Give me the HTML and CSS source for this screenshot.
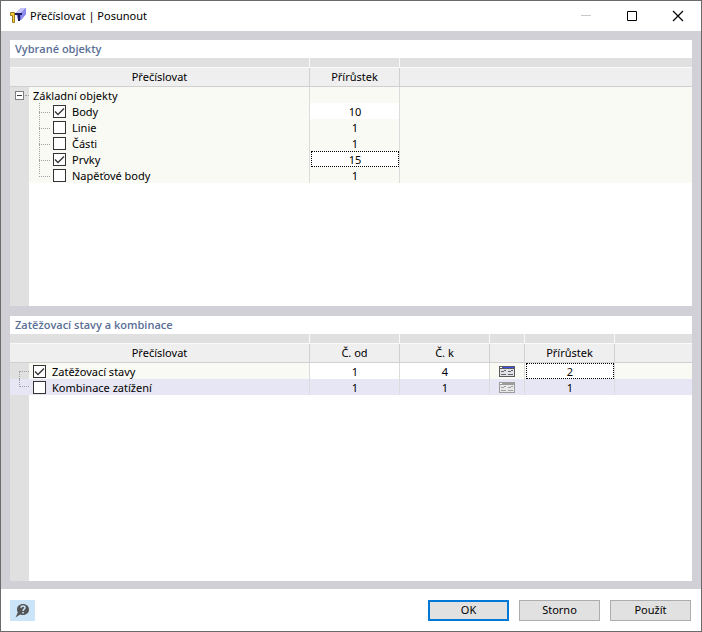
FILE: index.html
```html
<!DOCTYPE html>
<html lang="cs">
<head>
    <meta charset="UTF-8">
    <meta name="viewport" content="width=device-width, initial-scale=1.0">
    <title>Přečíslovat | Posunout</title>
    <link rel="stylesheet" href="styles.css">
</head>
<body>
    <div class="window">
        <header class="titlebar">
            <svg class="app-icon" width="18" height="18" viewBox="0 0 18 18">
                <path d="M7 6L12 1H17V7L12 13H9Z" fill="#7474e6"/>
                <path d="M7 6L12 1H17L12 6Z" fill="#c4c4fa"/>
                <path d="M12 6L17 1V7L12 13Z" fill="#8c8cf0"/>
                <path d="M6 6H13V8H11V14H9V8H6Z" fill="#1c1c5c"/>
                <path d="M1.500 5.500H5.500V15.500H3.500V8.500H1.500Z" fill="#f5d02e" stroke="#9a7a2a"/>
            </svg>
            <h1>Přečíslovat | Posunout</h1>
            <div class="window-buttons">
                <button type="button" aria-label="Minimalizovat" disabled>
                    <svg width="12" height="12" viewBox="0 0 12 12"><path d="M1 5.500H11" stroke="#c8c8c8"/></svg>
                </button>
                <button type="button" aria-label="Maximalizovat">
                    <svg width="12" height="12" viewBox="0 0 12 12"><path d="M1.500 1.500H10.500V10.500H1.500Z" fill="none" stroke="#000"/></svg>
                </button>
                <button type="button" aria-label="Zavřít">
                    <svg width="12" height="12" viewBox="0 0 12 12"><path d="M1 1L11 11M11 1L1 11" stroke="#000" stroke-width="1.200"/></svg>
                </button>
            </div>
        </header>

        <main class="content">
            <section class="panel panel-objects">
                <h2>Vybrané objekty</h2>
                <table>
                    <colgroup>
                        <col class="col-gutter"><col class="col-name"><col class="col-value"><col>
                    </colgroup>
                    <thead>
                        <tr class="strip"><td colspan="2"></td><td></td><td></td></tr>
                        <tr><th colspan="2">Přečíslovat</th><th>Přírůstek</th><th></th></tr>
                    </thead>
                    <tbody>
                        <tr>
                            <td class="gutter"><div class="toggle-line"><button class="toggle" type="button" aria-label="Sbalit"></button></div></td>
                            <td><div class="item root">Základní objekty</div></td><td></td><td></td>
                        </tr>
                        <tr>
                            <td class="gutter"></td>
                            <td><div class="item child"><input type="checkbox" id="body" checked><label for="body">Body</label></div></td>
                            <td><input class="value" type="text" value="10" aria-label="Body přírůstek"></td><td></td>
                        </tr>
                        <tr>
                            <td class="gutter"></td>
                            <td><div class="item child"><input type="checkbox" id="linie"><label for="linie">Linie</label></div></td>
                            <td><div class="number">1</div></td><td></td>
                        </tr>
                        <tr>
                            <td class="gutter"></td>
                            <td><div class="item child"><input type="checkbox" id="casti"><label for="casti">Části</label></div></td>
                            <td><div class="number">1</div></td><td></td>
                        </tr>
                        <tr>
                            <td class="gutter"></td>
                            <td><div class="item child"><input type="checkbox" id="prvky" checked><label for="prvky">Prvky</label></div></td>
                            <td class="current"><input class="value" type="text" value="15" aria-label="Prvky přírůstek"></td><td></td>
                        </tr>
                        <tr>
                            <td class="gutter"></td>
                            <td><div class="item child last"><input type="checkbox" id="napetove"><label for="napetove">Napěťové body</label></div></td>
                            <td><div class="number">1</div></td><td></td>
                        </tr>
                    </tbody>
                </table>
            </section>

            <section class="panel">
                <h2>Zatěžovací stavy a kombinace</h2>
                <table>
                    <colgroup>
                        <col class="col-gutter"><col class="col-name"><col class="col-value"><col class="col-value"><col class="col-icon"><col class="col-value"><col>
                    </colgroup>
                    <thead>
                        <tr class="strip"><td colspan="2"></td><td></td><td></td><td></td><td></td><td></td></tr>
                        <tr><th colspan="2">Přečíslovat</th><th>Č. od</th><th>Č. k</th><th></th><th>Přírůstek</th><th></th></tr>
                    </thead>
                    <tbody>
                        <tr>
                            <td class="gutter"><div class="link link-top"></div></td>
                            <td><div class="item"><input type="checkbox" id="stavy" checked><label for="stavy">Zatěžovací stavy</label></div></td>
                            <td><input class="value" type="text" value="1" aria-label="Č. od"></td>
                            <td><input class="value" type="text" value="4" aria-label="Č. k"></td>
                            <td>
                                <button class="pick" type="button" aria-label="Vybrat">
                                    <svg width="16" height="11" viewBox="0 0 16 11">
                                        <path d="M0 0H16V11H0Z" fill="#5a5a5a"/>
                                        <path d="M1 3H15V10H1Z" fill="#e2e2ea"/>
                                        <path d="M1 1H3V2H1Z" fill="#fff"/>
                                        <path d="M4 1H15V2H4Z" fill="#3c50f0"/>
                                        <path d="M2 5.500H5M5 4.500H7M9 5.500H12M12 4.500H14M2 8.500H7M9 8.500H14" stroke="#666"/>
                                    </svg>
                                </button>
                            </td>
                            <td class="current"><input class="value" type="text" value="2" aria-label="Přírůstek"></td><td></td>
                        </tr>
                        <tr class="selected">
                            <td class="gutter"><div class="link link-bottom"></div></td>
                            <td><div class="item"><input type="checkbox" id="kombinace"><label for="kombinace">Kombinace zatížení</label></div></td>
                            <td><div class="number">1</div></td>
                            <td><div class="number">1</div></td>
                            <td>
                                <button class="pick" type="button" aria-label="Vybrat" disabled>
                                    <svg width="16" height="11" viewBox="0 0 16 11">
                                        <path d="M0 0H16V11H0Z" fill="#9c9c9c"/>
                                        <path d="M1 3H15V10H1Z" fill="#e8e8e8"/>
                                        <path d="M1 1H3V2H1Z" fill="#fff"/>
                                        <path d="M2 5.500H5M5 4.500H7M9 5.500H12M12 4.500H14M2 8.500H7M9 8.500H14" stroke="#a0a0a0"/>
                                    </svg>
                                </button>
                            </td>
                            <td><div class="number">1</div></td><td></td>
                        </tr>
                    </tbody>
                </table>
            </section>
        </main>

        <footer class="footer">
            <button class="help" type="button" aria-label="Nápověda">
                <svg width="15" height="15" viewBox="0 0 15 15">
                    <path d="M8 1C11.500 1 14 3.300 14 6.500S11.500 12 8 12C7 12 6 11.800 5.200 11.400L0.500 14.500L2.800 9.600C2.200 8.700 2 7.600 2 6.500C2 3.300 4.500 1 8 1Z" fill="#555"/>
                    <path d="M6 4.800C6 2.500 10 2.500 10 4.800C10 6.200 8 6.200 8 8" fill="none" stroke="#cce4f7" stroke-width="1.500"/>
                    <path d="M7.200 9H8.800V10.500H7.200Z" fill="#cce4f7"/>
                </svg>
            </button>
            <button class="btn btn-default" type="button">OK</button>
            <button class="btn" type="button">Storno</button>
            <button class="btn" type="button">Použít</button>
        </footer>
    </div>
</body>
</html>
```
FILE: styles.css
```css
* {
    box-sizing: border-box;
}
body {
    margin: 0;
    font-family: "Noto Sans", sans-serif;
    font-size: 11px;
    line-height: 16px;
    color: #000;
}
button {
    font: inherit;
    color: inherit;
    padding: 0;
    border: none;
    background: none;
}
svg {
    display: block;
}
.window {
    display: flex;
    flex-direction: column;
    min-height: 100vh;
    border: 1px solid #6b6b6b;
    background: #fff;
}

/* title bar */
.titlebar {
    display: flex;
    align-items: center;
    height: 30px;
    padding-left: 8px;
}
.titlebar h1 {
    flex: 1;
    margin: 0 0 0 3px;
    font-size: 11px;
    font-weight: 400;
}
.window-buttons {
    display: flex;
}
.window-buttons button {
    display: flex;
    align-items: center;
    justify-content: center;
    width: 46px;
    height: 28px;
}

/* panels */
.content {
    flex: 1;
    display: flex;
    flex-direction: column;
    gap: 10px;
    padding: 9px 9px 8px;
    background: #d1d0d6;
}
.panel {
    flex: 1 1 0;
    background: linear-gradient(to right, #e0e0e0 19px, #fff 19px);
}
.panel-objects {
    flex-basis: 1px;
}
.panel h2 {
    height: 18px;
    margin: 0;
    padding-left: 5px;
    background: #fff;
    color: #5a6f96;
    font-family: "Open Sans", sans-serif;
    font-size: 11px;
    font-weight: 600;
    line-height: 18px;
}
table {
    width: 100%;
    table-layout: fixed;
    border-collapse: separate;
    border-spacing: 0;
}
.col-gutter {
    width: 19px;
}
.col-name {
    width: 281px;
}
.col-value {
    width: 90px;
}
.col-icon {
    width: 35px;
}
th,
td {
    padding: 0;
    text-align: center;
    white-space: nowrap;
}
.strip td {
    height: 10px;
    background: #e0e0e0;
    border-right: 1px solid #fafafa;
    border-bottom: 1px solid #fafafa;
}
th {
    height: 19px;
    background: #efefef;
    border-right: 1px solid #d0d0d0;
    border-bottom: 1px solid #d0d0d0;
    font-weight: 400;
}
tbody td {
    height: 16px;
    background: #f9faf4;
    border-right: 1px solid #dcdcdc;
}
tr > :last-child {
    border-right: none;
}
tbody .gutter {
    background: #e0e0e0;
    border-right: none;
}
tbody .selected td {
    background: #e6e6f4;
}

/* tree */
.toggle-line {
    display: flex;
    align-items: center;
    height: 16px;
    padding: 1px 0 0 5px;
}
.toggle-line::after {
    content: "";
    flex: 1;
    margin-left: 1px;
    border-top: 1px dotted #a0a0a0;
}
.toggle {
    width: 9px;
    height: 9px;
    border: 1px solid #808080;
    background: linear-gradient(#404040, #404040) center / 5px 1px no-repeat #fff;
}
.item {
    display: flex;
    height: 16px;
    padding-left: 4px;
    line-height: 18px;
}
.item input {
    appearance: none;
    flex: none;
    width: 13px;
    height: 13px;
    margin: 2px 6px 0 0;
    border: 1px solid #333;
    background: #fff;
}
.item input:checked {
    background: #fff url("data:image/svg+xml,%3Csvg xmlns='http://www.w3.org/2000/svg' viewBox='0 0 11 11'%3E%3Cpath d='M1 5.500L4 8.500L10 2.500' fill='none' stroke='%23333' stroke-width='1.300'/%3E%3C/svg%3E");
}
.child {
    padding-left: 10px;
    background: repeating-linear-gradient(#a0a0a0 0 1px, transparent 1px 2px) 10px 0 / 1px 16px no-repeat;
}
.child.last {
    background-size: 1px 8px;
}
.child::before {
    content: "";
    width: 11px;
    height: 9px;
    margin-right: 3px;
    border-bottom: 1px dotted #a0a0a0;
}
.link {
    width: 10px;
    height: 8px;
    margin-left: 9px;
    border-left: 1px dotted #a0a0a0;
}
.link-top {
    margin-top: 8px;
    border-top: 1px dotted #a0a0a0;
}
.link-bottom {
    margin-bottom: 8px;
    border-bottom: 1px dotted #a0a0a0;
}
.root {
    padding-left: 4px;
}
.child::before {
    flex: none;
}
.child input {
    margin-right: 6px;
}

/* cells */
.number,
.value {
    display: block;
    width: 100%;
    height: 16px;
    padding: 2px 0 0 1px;
    line-height: 14px;
    text-align: center;
}
.value {
    border: none;
    background: #fff;
    color: inherit;
    font: inherit;
}
tbody .current {
    padding-left: 1px;
    background: #fff;
}
.current .value {
    padding: 1px 0 0;
    border: 1px dotted #000;
}
.pick {
    display: block;
    margin: 0 auto;
}

/* buttons */
.footer {
    display: flex;
    align-items: center;
    gap: 10px;
    height: 42px;
    padding: 0 10px 0 9px;
}
.help {
    display: flex;
    align-items: center;
    justify-content: center;
    width: 25px;
    height: 21px;
    margin-right: auto;
    background: #cce4f7;
}
.btn {
    width: 81px;
    height: 21px;
    border: 1px solid #adadad;
    background: #e1e1e1;
}
.btn-default {
    border: 2px solid #0078d7;
}
```
